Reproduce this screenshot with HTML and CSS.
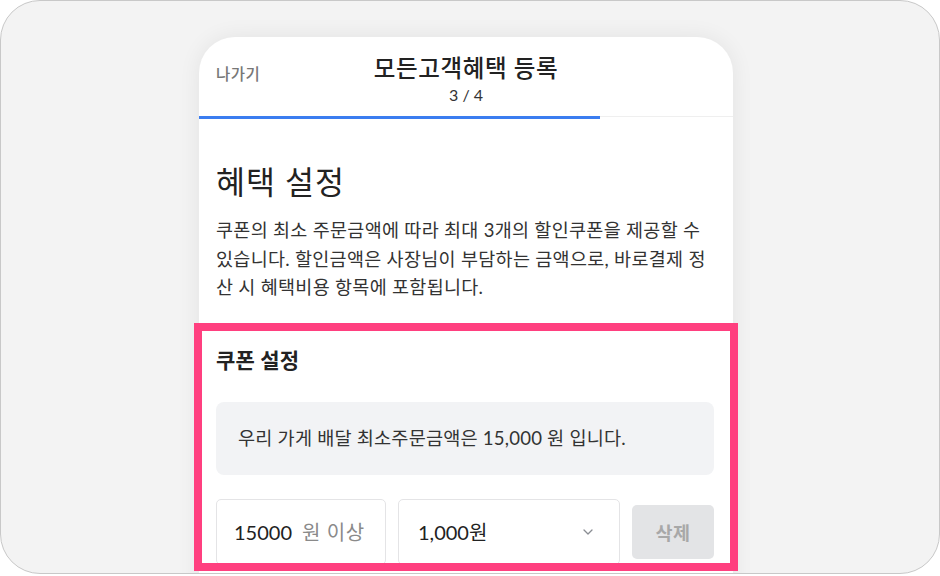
FILE: index.html
```html
<!DOCTYPE html>
<html lang="ko">
<head>
<meta charset="utf-8">
<title>모든고객혜택 등록</title>
<link rel="stylesheet" href="styles.css">
</head>
<body>
<div class="frame">
  <div class="card">
    <header class="top">
      <span class="exit">나가기</span>
      <div class="title-block">
        <h1 class="title">모든고객혜택 등록</h1>
        <div class="step">3 / 4</div>
      </div>
      <span></span>
    </header>
    <div class="track"><div class="fill" style="width:75%"></div></div>
    <div class="content">
      <h2 class="heading">혜택 설정</h2>
      <p class="desc">쿠폰의 최소 주문금액에 따라 최대 3개의 할인쿠폰을 제공할 수 있습니다. 할인금액은 사장님이 부담하는 금액으로, 바로결제 정산 시 혜택비용 항목에 포함됩니다.</p>
    </div>
    <section class="coupon">
      <h3 class="sub">쿠폰 설정</h3>
      <div class="info">우리 가게 배달 최소주문금액은 15,000 원 입니다.</div>
      <div class="row">
        <div class="field"><span class="val">15000</span><span class="unit">원 이상</span></div>
        <div class="field select"><span class="val">1,000원</span>
          <svg class="chev" width="10" height="6" viewBox="0 0 10 6"><path d="M1 1l4 4 4-4" fill="none" stroke="#8a8d93" stroke-width="1.3" stroke-linecap="round" stroke-linejoin="round"/></svg>
        </div>
        <button class="del" type="button">삭제</button>
      </div>
    </section>
  </div>
</div>
</body>
</html>
```

FILE: styles.css
```css
* { box-sizing: border-box; }
html, body { margin: 0; padding: 0; background: #fff; }
body {
  font-family: "Lato", "Noto Sans CJK KR", sans-serif;
  color: #222;
}
.frame {
  width: 940px;
  height: 574px;
  border: 1px solid #c8c8c8;
  border-radius: 40px;
  background: #f3f3f3;
  overflow: hidden;
  padding: 36px 0 0 198px;
}
.card {
  width: 534px;
  min-height: 620px;
  background: #fff;
  border-radius: 36px 36px 0 0;
  box-shadow: 0 0 22px rgba(0, 0, 0, 0.07);
}
.top {
  display: grid;
  grid-template-columns: 1fr auto 1fr;
  padding: 18px 17px 11px;
}
.exit {
  margin-top: 9px;
  font-size: 15.5px;
  line-height: 20px;
  font-weight: 500;
  letter-spacing: 0.5px;
  color: #777;
}
.title-block { text-align: center; }
.title {
  margin: 0;
  font-size: 23.5px;
  line-height: 26px;
  font-weight: 500;
  letter-spacing: 0.6px;
  color: #222;
}
.step {
  margin-top: 4px;
  font-size: 16px;
  line-height: 20px;
  color: #333;
}
.track {
  height: 3px;
  background: linear-gradient(#efefef 0 1px, transparent 1px);
}
.fill { height: 3px; background: #3b7df0; }
.content { padding: 43px 17px 0; }
.heading {
  margin: 0;
  font-size: 31.5px;
  line-height: 40px;
  font-weight: 400;
  letter-spacing: 1px;
  color: #222;
}
.desc {
  margin: 14px 0 0;
  font-size: 18.5px;
  line-height: 28.5px;
  letter-spacing: 0.3px;
  color: #333;
}
.coupon {
  margin-top: 26px;
  padding: 18px 17px 0;
  outline: 8px solid #ff3f7f;
  outline-offset: -3px;
  height: 238px;
}
.sub {
  margin: 0;
  font-size: 21px;
  line-height: 28px;
  font-weight: 700;
  letter-spacing: 0.2px;
  color: #222;
}
.info {
  margin-top: 28px;
  margin-right: 2px;
  background: #f2f3f5;
  border-radius: 8px;
  padding: 23px 22px;
  font-size: 18.6px;
  line-height: 27px;
  letter-spacing: 0.2px;
  color: #333;
}
.row {
  margin-top: 24px;
  display: grid;
  grid-template-columns: 170px 222px 1fr;
  gap: 12px;
  align-items: center;
}
.field {
  height: 66px;
  border: 1px solid #e4e4e6;
  border-radius: 5px;
  display: flex;
  align-items: center;
  padding-left: 17px;
  font-size: 20px;
  color: #222;
}
.unit { margin-left: 10px; letter-spacing: 0.6px; color: #8a8a8a; }
.select { padding: 0 26px 0 19px; justify-content: space-between; }
.del {
  height: 54px;
  margin-right: 2px;
  border: none;
  border-radius: 5px;
  background: #e3e4e6;
  color: #a8a8a8;
  font-family: inherit;
  font-size: 18.5px;
  font-weight: 700;
  letter-spacing: 0.5px;
  padding: 0;
}
```
